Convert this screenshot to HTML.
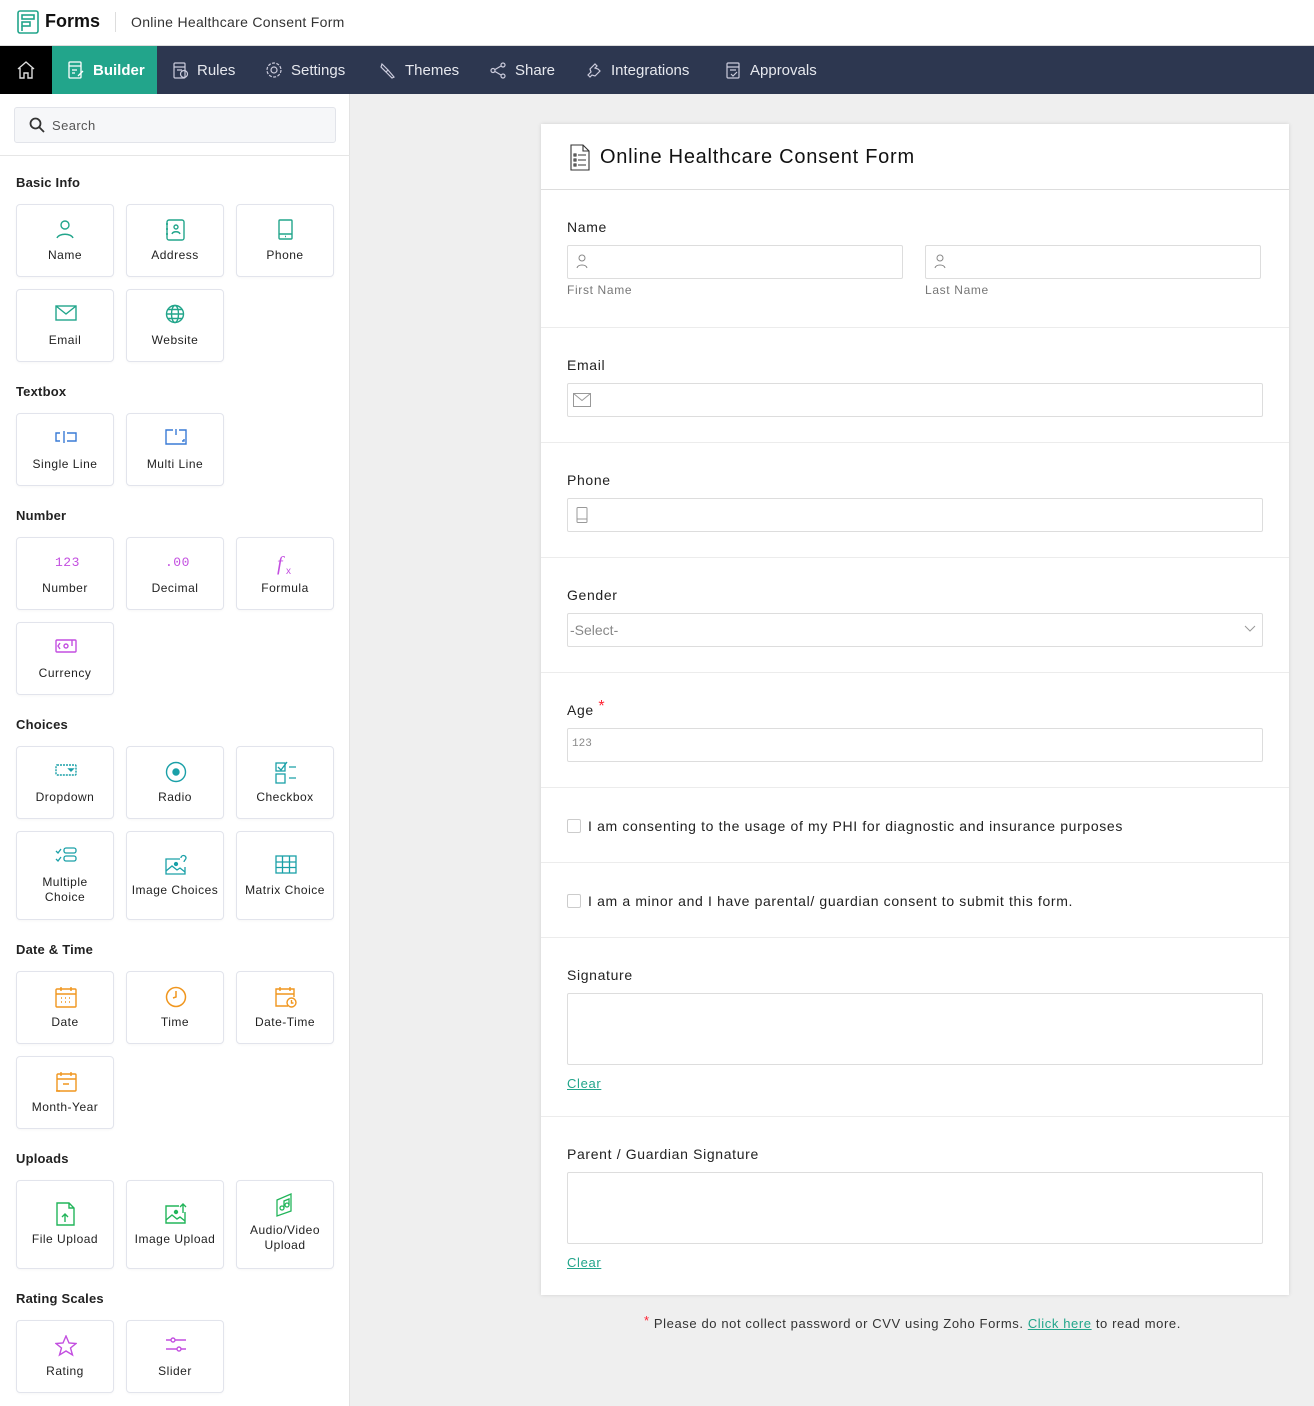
<!DOCTYPE html>
<html><head><meta charset="utf-8">
<style>
*{box-sizing:border-box;margin:0;padding:0}
body{width:1314px;height:1406px;position:relative;overflow:hidden;font-family:"Liberation Sans",sans-serif;background:#efefef;color:#222}
.a{position:absolute}
#top{left:0;top:0;width:1314px;height:46px;background:#fff;border-bottom:1px solid #ddd}
#nav{left:0;top:46px;width:1314px;height:48px;background:#2d3750}
.ni{position:absolute;top:0;height:48px;display:flex;align-items:center;color:#e6e8ee;font-size:15px;gap:8px}
#side{left:0;top:94px;width:350px;height:1312px;background:#fff;border-right:1px solid #e3e3e3}
.h{position:absolute;left:16px;font-size:13px;font-weight:bold;color:#222;letter-spacing:.2px}
.c{position:absolute;width:98px;height:73px;border:1px solid #e2e4ec;border-radius:4px;background:#fff;text-align:center;font-size:12px;color:#222;letter-spacing:.5px;box-shadow:0 1px 2px rgba(0,0,0,.03)}
.c svg{position:absolute;left:38px;top:14px}
.c span{position:absolute;left:-4px;right:-4px;top:43px;line-height:15px}
.c.t{height:89px}
#card{left:541px;top:124px;width:748px;height:1171px;background:#fff;box-shadow:0 0 4px rgba(0,0,0,.12);letter-spacing:.65px}
.lb{position:absolute;left:26px;font-size:14px;color:#222}
.in{position:absolute;left:26px;width:696px;height:34px;border:1px solid #ddd;border-radius:2px;background:#fff}
.dv{position:absolute;left:0;width:748px;height:1px;background:#ececec}
.sl{position:absolute;font-size:12px;color:#777}
.cb{position:absolute;left:26px;width:14px;height:14px;border:1px solid #ccc;border-radius:2px}
.ct{position:absolute;left:47px;font-size:14px;color:#222}
.clr{position:absolute;left:26px;font-size:13px;color:#22a58b;text-decoration:underline}
</style></head><body>
<div id="top" class="a">
 <svg class="a" style="left:17px;top:10px" width="22" height="24" viewBox="0 0 22 24" fill="none" stroke="#22a58b" stroke-width="1.6"><rect x="1" y="1" width="20" height="22" rx="2"/><rect x="5" y="5" width="12" height="4"/><rect x="5" y="12" width="8" height="4"/><path d="M5 16v5"/></svg>
 <div class="a" style="left:45px;top:11px;font-size:18px;font-weight:bold;color:#111">Forms</div>
 <div class="a" style="left:115px;top:12px;width:1px;height:20px;background:#ddd"></div>
 <div class="a" style="left:131px;top:14px;font-size:14px;color:#333;letter-spacing:.3px">Online Healthcare Consent Form</div>
</div>
<div id="nav" class="a">
 <div class="a" style="left:0;top:0;width:52px;height:48px;background:#000"></div>
 <svg class="a" style="left:17px;top:15px" width="18" height="18" viewBox="0 0 18 18" fill="none" stroke="#ddd" stroke-width="1.4"><path d="M1 8L9 1l8 7M3 7v10h4v-5h4v5h4V7"/></svg>
 <div class="a" style="left:52px;top:0;width:105px;height:48px;background:#22a58b"></div>
 <div class="ni" style="left:67px;color:#fff;font-weight:bold"><svg width="18" height="18" viewBox="0 0 18 18" fill="none" stroke="#fff" stroke-width="1.3"><rect x="2" y="1" width="12" height="16" rx="1"/><path d="M2 5h12M5 9h5M5 12h3M11 15l5-5"/></svg>Builder</div>
 <div class="ni" style="left:172px"><svg width="17" height="17" viewBox="0 0 17 17" fill="none" stroke="#ccd" stroke-width="1.2"><rect x="2" y="1" width="11" height="15" rx="1"/><path d="M2 5h11M5 8h5"/><circle cx="12" cy="12" r="3.5"/></svg>Rules</div>
 <div class="ni" style="left:265px"><svg width="18" height="18" viewBox="0 0 18 18" fill="none" stroke="#ccd" stroke-width="1.2"><circle cx="9" cy="9" r="3"/><circle cx="9" cy="9" r="7" stroke-dasharray="3 1.4"/></svg>Settings</div>
 <div class="ni" style="left:379px"><svg width="18" height="18" viewBox="0 0 18 18" fill="none" stroke="#ccd" stroke-width="1.2"><path d="M3 3l6 6-2 2-5-5zM9 9l6 7-2 1-6-6"/></svg>Themes</div>
 <div class="ni" style="left:490px"><svg width="17" height="17" viewBox="0 0 17 17" fill="none" stroke="#ccd" stroke-width="1.2"><circle cx="3" cy="8.5" r="2"/><circle cx="13" cy="3" r="2"/><circle cx="13" cy="14" r="2"/><path d="M5 7.5l6-3.5M5 9.5l6 3.5"/></svg>Share</div>
 <div class="ni" style="left:586px"><svg width="17" height="17" viewBox="0 0 17 17" fill="none" stroke="#ccd" stroke-width="1.2"><path d="M4 15l-2-2 3-3-1-3 5-5 2 2-2 2 3 1 2 2-5 5-3-1z"/></svg>Integrations</div>
 <div class="ni" style="left:725px"><svg width="17" height="17" viewBox="0 0 17 17" fill="none" stroke="#ccd" stroke-width="1.2"><rect x="2" y="1" width="12" height="15" rx="1"/><path d="M2 5h12M5 8h6M6 12l2 2 4-4"/></svg>Approvals</div>
</div>
<div id="side" class="a">
 <div class="a" style="left:14px;top:13px;width:322px;height:36px;background:#f6f7f9;border:1px solid #e2e4ea;border-radius:3px"></div>
 <svg class="a" style="left:29px;top:23px" width="16" height="16" viewBox="0 0 16 16" fill="none" stroke="#333" stroke-width="1.8"><circle cx="6.5" cy="6.5" r="5"/><path d="M10 10l5 5"/></svg>
 <div class="a" style="left:52px;top:24px;font-size:13px;color:#555;letter-spacing:.4px">Search</div>
 <div class="a" style="left:0;top:61px;width:350px;height:1px;background:#e6e6e6"></div>
</div>
<div class="h" style="top:175px">Basic Info</div>
<div class="c" style="left:16px;top:204px"><svg width="20" height="20" viewBox="0 0 20 20" fill="none" stroke="#22a58b" stroke-width="1.4"><circle cx="10" cy="6" r="4"/><path d="M2 19c2-5 14-5 16 0"/></svg><span>Name</span></div>
<div class="c" style="left:126px;top:204px"><svg width="20" height="22" viewBox="0 0 20 22" fill="none" stroke="#22a58b" stroke-width="1.4"><rect x="2" y="1" width="17" height="20" rx="2"/><circle cx="11" cy="8" r="2"/><path d="M7 15c1-3 7-3 8 0M1 5h2M1 10h2M1 15h2"/></svg><span>Address</span></div>
<div class="c" style="left:236px;top:204px"><svg width="20" height="22" viewBox="0 0 20 22" fill="none" stroke="#22a58b" stroke-width="1.4"><rect x="4" y="1" width="13" height="19" rx="1"/><path d="M4 15h13M10 17.5h1"/></svg><span>Phone</span></div>
<div class="c" style="left:16px;top:289px"><svg width="22" height="18" viewBox="0 0 22 18" fill="none" stroke="#22a58b" stroke-width="1.4"><rect x="1" y="2" width="20" height="14"/><path d="M1 2l10 8 10-8"/></svg><span>Email</span></div>
<div class="c" style="left:126px;top:289px"><svg width="20" height="20" viewBox="0 0 20 20" fill="none" stroke="#22a58b" stroke-width="1.4"><circle cx="10" cy="10" r="8.5"/><ellipse cx="10" cy="10" rx="3.5" ry="8.5"/><path d="M1.5 10h17M3 5.5h14M3 14.5h14"/></svg><span>Website</span></div>

<div class="h" style="top:384px">Textbox</div>
<div class="c" style="left:16px;top:413px"><svg width="22" height="18" viewBox="0 0 22 18" fill="none" stroke="#3a7bd5" stroke-width="1.4"><path d="M5 5H1v8h4M9 3v12M12 5h9v8h-9"/></svg><span>Single Line</span></div>
<div class="c" style="left:126px;top:413px"><svg width="22" height="18" viewBox="0 0 22 18" fill="none" stroke="#3a7bd5" stroke-width="1.4"><path d="M8 2H1v14h20V2h-7M11 1v6"/><path d="M17 13h2v-2" /></svg><span>Multi Line</span></div>

<div class="h" style="top:508px">Number</div>
<div class="c" style="left:16px;top:537px"><svg width="24" height="18" viewBox="0 0 24 18"><text x="0" y="14" font-family="Liberation Mono" font-size="13" fill="#c34fe0">123</text></svg><span>Number</span></div>
<div class="c" style="left:126px;top:537px"><svg width="24" height="18" viewBox="0 0 24 18"><text x="0" y="14" font-family="Liberation Mono" font-size="13" fill="#c34fe0">.00</text></svg><span>Decimal</span></div>
<div class="c" style="left:236px;top:537px"><svg width="22" height="24" viewBox="0 0 22 24"><text x="2" y="18" font-family="Liberation Serif" font-style="italic" font-size="20" fill="#c34fe0">f</text><text x="11" y="22" font-family="Liberation Sans" font-size="10" fill="#c34fe0">x</text></svg><span>Formula</span></div>
<div class="c" style="left:16px;top:622px"><svg width="22" height="18" viewBox="0 0 22 18" fill="none" stroke="#c34fe0" stroke-width="1.4"><rect x="1" y="3" width="20" height="12" rx="1"/><circle cx="11" cy="9" r="2"/><path d="M5 6l-2 3 2 3M17 3v6"/></svg><span>Currency</span></div>

<div class="h" style="top:717px">Choices</div>
<div class="c" style="left:16px;top:746px"><svg width="22" height="18" viewBox="0 0 22 18" fill="none" stroke="#1aa0a8" stroke-width="1.4"><rect x="1" y="4" width="20" height="10" rx="1" stroke-dasharray="2 1"/><path d="M14 8h4l-2 2z" fill="#1aa0a8"/></svg><span>Dropdown</span></div>
<div class="c" style="left:126px;top:746px"><svg width="22" height="22" viewBox="0 0 22 22" fill="none" stroke="#1aa0a8" stroke-width="1.4"><circle cx="11" cy="11" r="9.5"/><circle cx="11" cy="11" r="3" fill="#1aa0a8"/></svg><span>Radio</span></div>
<div class="c" style="left:236px;top:746px"><svg width="22" height="24" viewBox="0 0 22 24" fill="none" stroke="#1aa0a8" stroke-width="1.3"><rect x="1" y="2" width="9" height="8"/><rect x="1" y="13" width="9" height="9"/><path d="M3 6l3 3 6-8M14 6h7M14 17h7"/></svg><span>Checkbox</span></div>
<div class="c t" style="left:16px;top:831px"><svg width="22" height="18" viewBox="0 0 22 18" fill="none" stroke="#1aa0a8" stroke-width="1.3"><path d="M1 5l2 2 3-4M1 13l2 2 3-4"/><rect x="9" y="2" width="12" height="5" rx="2"/><rect x="9" y="10" width="12" height="5" rx="2"/></svg><span style="top:43px">Multiple<br>Choice</span></div>
<div class="c t" style="left:126px;top:831px"><svg width="22" height="22" viewBox="0 0 22 22" fill="none" stroke="#1aa0a8" stroke-width="1.3" style="top:22px"><path d="M15 5H1v15h19v-7"/><path d="M1 17l6-5 5 4 3-2 5 4"/><circle cx="11" cy="10" r="1.5" fill="#1aa0a8"/><path d="M16 4a2.5 2.5 0 115 0c0 2-2 2-2 4"/></svg><span style="top:51px">Image Choices</span></div>
<div class="c t" style="left:236px;top:831px"><svg width="22" height="20" viewBox="0 0 22 20" fill="none" stroke="#1aa0a8" stroke-width="1.3" style="top:23px"><rect x="1" y="1" width="20" height="17"/><path d="M1 7h20M1 12.5h20M7.5 1v17M14.5 1v17"/></svg><span style="top:51px">Matrix Choice</span></div>

<div class="h" style="top:942px">Date &amp; Time</div>
<div class="c" style="left:16px;top:971px"><svg width="22" height="22" viewBox="0 0 22 22" fill="none" stroke="#f0961e" stroke-width="1.4"><rect x="1" y="3" width="20" height="18" rx="1"/><path d="M1 8h20M6 1v4M16 1v4M6 12h1M10 12h1M14 12h1M6 16h1M10 16h1M14 16h1"/></svg><span>Date</span></div>
<div class="c" style="left:126px;top:971px"><svg width="22" height="22" viewBox="0 0 22 22" fill="none" stroke="#f0961e" stroke-width="1.5"><circle cx="11" cy="11" r="9.5"/><path d="M11 5v6l-3 1"/></svg><span>Time</span></div>
<div class="c" style="left:236px;top:971px"><svg width="22" height="22" viewBox="0 0 22 22" fill="none" stroke="#f0961e" stroke-width="1.4"><path d="M13 20H1V3h18v8M1 8h18M5 1v4M15 1v4"/><circle cx="16.5" cy="16.5" r="4.5"/><path d="M16.5 14v3h2"/></svg><span>Date-Time</span></div>
<div class="c" style="left:16px;top:1056px"><svg width="22" height="22" viewBox="0 0 22 22" fill="none" stroke="#f0961e" stroke-width="1.4"><rect x="2" y="3" width="19" height="17" rx="1"/><path d="M2 8h19M6 1v4M16 1v4M8 13h6M1 20h4"/></svg><span>Month-Year</span></div>

<div class="h" style="top:1151px">Uploads</div>
<div class="c t" style="left:16px;top:1180px"><svg width="22" height="24" viewBox="0 0 22 24" fill="none" stroke="#22b55a" stroke-width="1.4" style="top:21px"><path d="M2 1h12l5 5v17H2z M14 1v5h5"/><path d="M10 20v-8M7 15l3-3 3 3"/></svg><span style="top:51px">File Upload</span></div>
<div class="c t" style="left:126px;top:1180px"><svg width="22" height="22" viewBox="0 0 22 22" fill="none" stroke="#22b55a" stroke-width="1.4" style="top:22px"><path d="M14 3H1v17h19V9"/><path d="M1 17l6-5 5 4 3-2 5 4"/><circle cx="11" cy="9" r="1.5" fill="#22b55a"/><path d="M18 10V1M15 4l3-3 3 3"/></svg><span style="top:51px">Image Upload</span></div>
<div class="c t" style="left:236px;top:1180px"><svg width="22" height="24" viewBox="0 0 22 24" fill="none" stroke="#22b55a" stroke-width="1.3" style="top:12px"><path d="M2 7l14-6v17l-14 5z"/><circle cx="7" cy="15" r="2"/><circle cx="12" cy="12" r="2"/><path d="M9 15V8l5-2v6"/></svg><span style="top:42px">Audio/Video<br>Upload</span></div>

<div class="h" style="top:1291px">Rating Scales</div>
<div class="c" style="left:16px;top:1320px"><svg width="22" height="22" viewBox="0 0 22 22" fill="none" stroke="#c34fe0" stroke-width="1.4"><path d="M11 1l3 7 7 .5-5.5 4.5 2 7-6.5-4-6.5 4 2-7L1 8.5 8 8z"/></svg><span>Rating</span></div>
<div class="c" style="left:126px;top:1320px"><svg width="22" height="20" viewBox="0 0 22 20" fill="none" stroke="#c34fe0" stroke-width="1.4"><path d="M1 5h20M1 14h20"/><circle cx="8" cy="5" r="2" fill="#fff"/><circle cx="14" cy="14" r="2" fill="#fff"/></svg><span>Slider</span></div>

<div id="card" class="a">
 <svg class="a" style="left:29px;top:20px" width="20" height="27" viewBox="0 0 20 27" fill="none" stroke="#333" stroke-width="1.1"><path d="M1 1h12l6 6v19H1z M13 1v6h6"/><rect x="4" y="10" width="2" height="2"/><rect x="4" y="15" width="2" height="2"/><rect x="4" y="20" width="2" height="2"/><path d="M8 11h8M8 16h8M8 21h8"/></svg>
 <div class="a" style="left:59px;top:22px;font-size:20px;color:#111;letter-spacing:.75px">Online Healthcare Consent Form</div>
 <div class="dv" style="top:65px;background:#ddd"></div>

 <div class="lb" style="top:95px">Name</div>
 <div class="in" style="top:121px;width:336px"></div>
 <div class="in" style="top:121px;left:384px;width:336px"></div>
 <svg class="a" style="left:35px;top:130px" width="12" height="16" viewBox="0 0 12 16" fill="none" stroke="#888" stroke-width="1"><circle cx="6" cy="4" r="3"/><path d="M1 14c1-4 9-4 10 0"/></svg>
 <svg class="a" style="left:393px;top:130px" width="12" height="16" viewBox="0 0 12 16" fill="none" stroke="#888" stroke-width="1"><circle cx="6" cy="4" r="3"/><path d="M1 14c1-4 9-4 10 0"/></svg>
 <div class="sl" style="left:26px;top:159px">First Name</div>
 <div class="sl" style="left:384px;top:159px">Last Name</div>
 <div class="dv" style="top:203px"></div>

 <div class="lb" style="top:233px">Email</div>
 <div class="in" style="top:259px"></div>
 <svg class="a" style="left:32px;top:269px" width="18" height="14" viewBox="0 0 18 14" fill="none" stroke="#999" stroke-width="1"><rect x="0.5" y="0.5" width="17" height="13"/><path d="M.5 .5l8.5 7 8.5-7"/></svg>
 <div class="dv" style="top:318px"></div>

 <div class="lb" style="top:348px">Phone</div>
 <div class="in" style="top:374px"></div>
 <svg class="a" style="left:35px;top:383px" width="12" height="16" viewBox="0 0 12 16" fill="none" stroke="#999" stroke-width="1"><rect x="1" y="0.5" width="10" height="15" rx="1"/><path d="M1 12h10"/></svg>
 <div class="dv" style="top:433px"></div>

 <div class="lb" style="top:463px">Gender</div>
 <div class="in" style="top:489px"></div>
 <div class="a" style="left:29px;top:498px;font-size:14px;color:#888;letter-spacing:0">-Select-</div>
 <svg class="a" style="left:703px;top:501px" width="12" height="8" viewBox="0 0 12 8" fill="none" stroke="#999" stroke-width="1"><path d="M1 1l5 5 5-5"/></svg>
 <div class="dv" style="top:548px"></div>

 <div class="lb" style="top:578px">Age <span style="color:#f23;font-size:16px;position:relative;top:-4px">*</span></div>
 <div class="in" style="top:604px"></div>
 <div class="a" style="left:31px;top:614px;font-size:11px;color:#888;font-family:'Liberation Mono',monospace;letter-spacing:0">123</div>
 <div class="dv" style="top:663px"></div>

 <div class="cb" style="top:695px"></div>
 <div class="ct" style="top:694px">I am consenting to the usage of my PHI for diagnostic and insurance purposes</div>
 <div class="dv" style="top:738px"></div>

 <div class="cb" style="top:770px"></div>
 <div class="ct" style="top:769px">I am a minor and I have parental/ guardian consent to submit this form.</div>
 <div class="dv" style="top:813px"></div>

 <div class="lb" style="top:843px">Signature</div>
 <div class="in" style="top:869px;height:72px"></div>
 <div class="clr" style="top:952px">Clear</div>
 <div class="dv" style="top:992px"></div>

 <div class="lb" style="top:1022px">Parent / Guardian Signature</div>
 <div class="in" style="top:1048px;height:72px"></div>
 <div class="clr" style="top:1131px">Clear</div>
</div>
<div class="a" style="left:644px;top:1316px;font-size:13px;color:#333;letter-spacing:.6px"><span style="color:#f23;position:relative;top:-3px">*</span> Please do not collect password or CVV using Zoho Forms. <span style="color:#22a58b;text-decoration:underline">Click here</span> to read more.</div>
</body></html>
